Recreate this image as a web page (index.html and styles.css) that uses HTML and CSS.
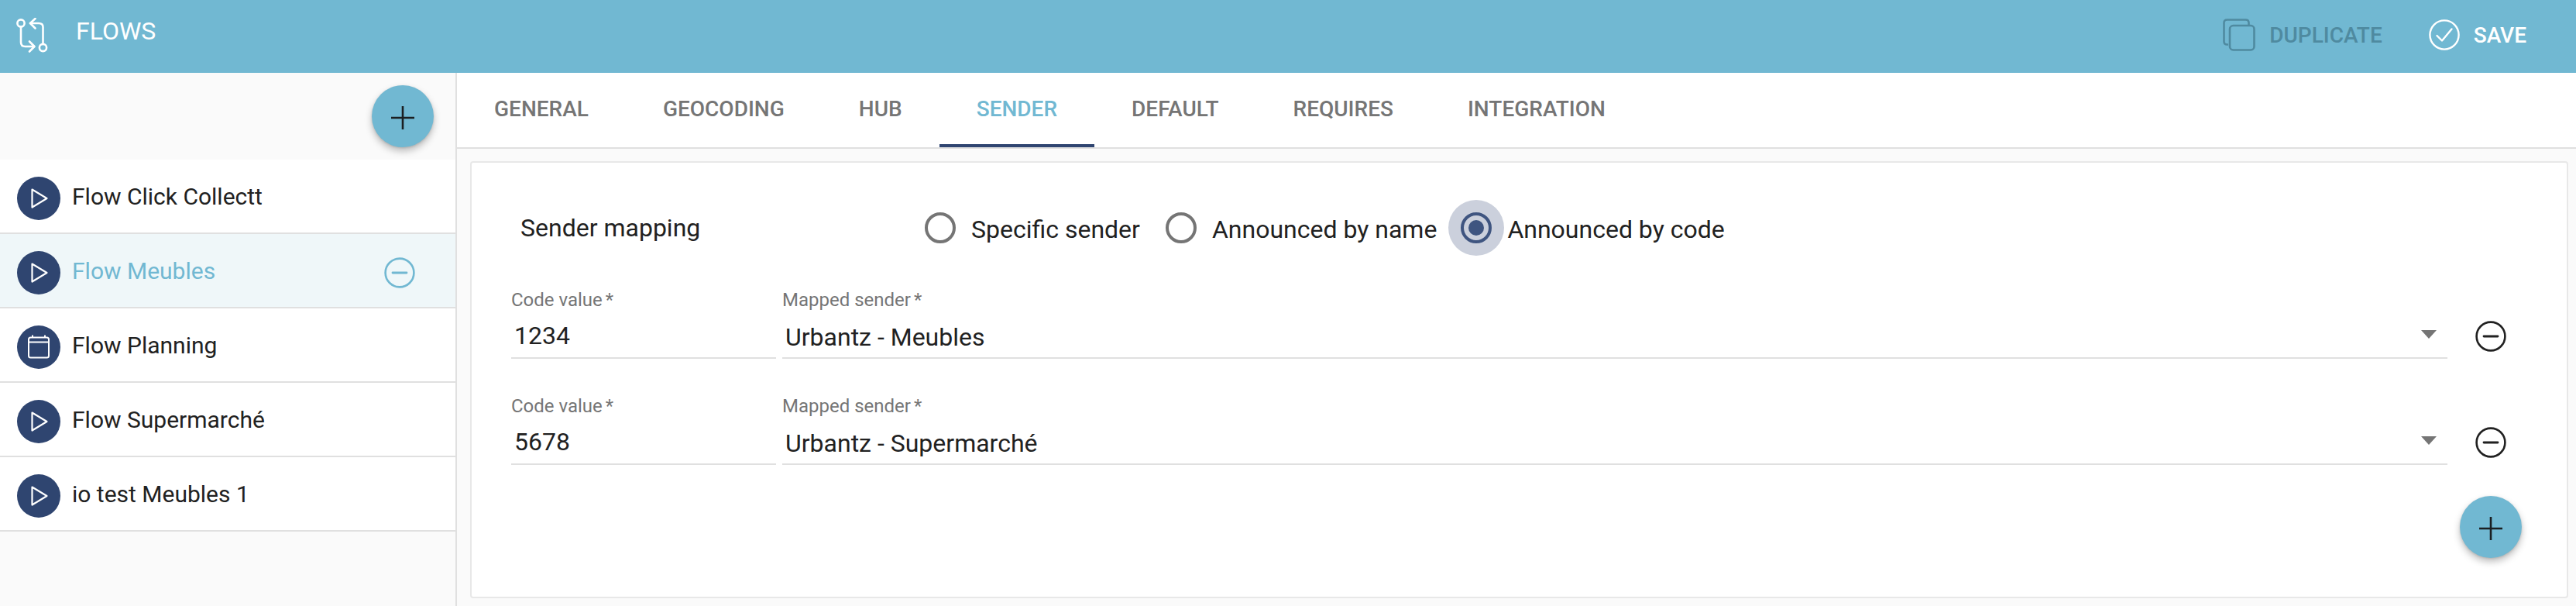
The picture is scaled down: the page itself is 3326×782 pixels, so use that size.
FILE: index.html
```html
<!DOCTYPE html>
<html lang="en">
<head>
<meta charset="utf-8">
<title>Flows</title>
<link rel="stylesheet" href="styles.css">
</head>
<body>
<svg class="defs" width="0" height="0" aria-hidden="true">
  <symbol id="play" viewBox="0 0 56 56"><path d="M19.5 16.5 L38.5 28 L19.5 39.5 Z" fill="none" stroke="#fff" stroke-width="2.2" stroke-linejoin="round"/></symbol>
  <symbol id="cal" viewBox="0 0 56 56"><rect x="15" y="15.5" width="26" height="26" rx="2.5" fill="none" stroke="#fff" stroke-width="2"/><path d="M15 21.5H41M20 12.5V15.5M36 12.5V15.5" fill="none" stroke="#fff" stroke-width="2"/></symbol>
  <symbol id="minus" viewBox="0 0 40 40"><circle cx="20" cy="20" r="18.4" fill="none" stroke="currentColor" stroke-width="2.6"/><path d="M11 20H29" stroke="currentColor" stroke-width="2.8" stroke-linecap="round"/></symbol>
  <symbol id="plus" viewBox="0 0 30 30"><path d="M15 0V30M0 15H30" stroke="#1b1f22" stroke-width="2.6" fill="none" stroke-linecap="round"/></symbol>
</svg>
<header class="topbar">
  <div class="brand">
    <svg class="flow-icon" width="42" height="46" viewBox="0 0 42 46" fill="none" stroke="#fff" stroke-width="2.6" stroke-linecap="round" stroke-linejoin="round">
      <circle cx="6" cy="7" r="4.6"/>
      <path d="M6 11.6V31.5Q6 37 11.5 37H23"/>
      <path d="M17 30.5L23.5 37L17 43.5"/>
      <circle cx="34.5" cy="38.5" r="4.6"/>
      <path d="M34.5 33.9V12Q34.5 7 29 7H18"/>
      <path d="M24.5 1L18 7L24.5 13.5"/>
    </svg>
    <span class="brand-title">FLOWS</span>
  </div>
  <div class="top-actions">
    <div class="top-btn disabled">
      <svg width="42" height="42" viewBox="0 0 42 42" fill="none" stroke="#4f8aa0" stroke-width="2.6">
        <path d="M7 33.5H5.5Q1.5 33.5 1.5 29.5V5.5Q1.5 1.5 5.5 1.5H29.5Q33.5 1.5 33.5 5.5V8"/>
        <rect x="9" y="9" width="31.5" height="31.5" rx="4.5"/>
      </svg>
      <span>DUPLICATE</span>
    </div>
    <div class="top-btn">
      <svg width="40" height="40" viewBox="0 0 40 40" fill="none" stroke="#fff" stroke-width="2.4" stroke-linecap="round" stroke-linejoin="round">
        <circle cx="20" cy="20" r="18.6"/>
        <path d="M10.5 21L17 27.5L29.5 12.5"/>
      </svg>
      <span>SAVE</span>
    </div>
  </div>
</header>
<div class="layout">
  <aside class="sidebar">
    <div class="side-head"><button class="fab" type="button"><svg width="30" height="30"><use href="#plus"/></svg></button></div>
    <ul class="flow-list">
      <li class="flow-row"><span class="avatar"><svg width="56" height="56"><use href="#play"/></svg></span><span class="flow-name">Flow Click Collectt</span></li>
      <li class="flow-row active"><span class="avatar"><svg width="56" height="56"><use href="#play"/></svg></span><span class="flow-name">Flow Meubles</span><svg class="row-remove" width="40" height="40"><use href="#minus"/></svg></li>
      <li class="flow-row"><span class="avatar"><svg width="56" height="56"><use href="#cal"/></svg></span><span class="flow-name">Flow Planning</span></li>
      <li class="flow-row"><span class="avatar"><svg width="56" height="56"><use href="#play"/></svg></span><span class="flow-name">Flow Supermarché</span></li>
      <li class="flow-row"><span class="avatar"><svg width="56" height="56"><use href="#play"/></svg></span><span class="flow-name">io test Meubles 1</span></li>
    </ul>
  </aside>
  <main class="main">
    <nav class="tabs">
      <div class="tab">GENERAL</div>
      <div class="tab">GEOCODING</div>
      <div class="tab">HUB</div>
      <div class="tab current">SENDER</div>
      <div class="tab">DEFAULT</div>
      <div class="tab">REQUIRES</div>
      <div class="tab">INTEGRATION</div>
    </nav>
    <section class="card">
      <div class="mapping-row">
        <div class="mapping-label">Sender mapping</div>
        <div class="radio-group">
          <label class="radio"><span class="radio-box"><span class="ring"></span></span><span class="radio-text">Specific sender</span></label>
          <label class="radio"><span class="radio-box"><span class="ring"></span></span><span class="radio-text">Announced by name</span></label>
          <label class="radio checked"><span class="radio-box"><span class="ring"><span class="dot"></span></span></span><span class="radio-text">Announced by code</span></label>
        </div>
      </div>
      <div class="field-row">
        <div class="field code"><div class="field-label">Code value<span class="req">*</span></div><div class="field-value">1234</div></div>
        <div class="field select"><div class="field-label">Mapped sender<span class="req">*</span></div><div class="field-value">Urbantz - Meubles</div><span class="caret"></span></div>
        <div class="row-action"><svg width="40" height="40"><use href="#minus"/></svg></div>
      </div>
      <div class="field-row">
        <div class="field code"><div class="field-label">Code value<span class="req">*</span></div><div class="field-value">5678</div></div>
        <div class="field select"><div class="field-label">Mapped sender<span class="req">*</span></div><div class="field-value">Urbantz - Supermarché</div><span class="caret"></span></div>
        <div class="row-action"><svg width="40" height="40"><use href="#minus"/></svg></div>
      </div>
      <div class="card-foot"><button class="fab" type="button"><svg width="30" height="30"><use href="#plus"/></svg></button></div>
    </section>
  </main>
</div>
</body>
</html>
```

FILE: styles.css
```css
* { box-sizing: border-box; }
html, body { margin: 0; height: 100%; }
body {
  font-family: Roboto, "Liberation Sans", sans-serif;
  color: #212121;
  background: #fafafa;
  display: flex;
  flex-direction: column;
  overflow: hidden;
}
.defs { position: absolute; }

.topbar {
  height: 94px;
  flex: none;
  background: #71b8d2;
  display: flex;
  justify-content: space-between;
  color: #fff;
}
.brand { display: flex; align-items: flex-start; padding: 23px 0 0 21px; }
.brand-title { font-size: 32px; font-weight: 400; line-height: 36px; margin: -1px 0 0 35px; }
.top-actions { display: flex; padding: 24px 64px 0 0; align-items: flex-start; }
.top-btn {
  display: flex;
  align-items: center;
  font-size: 28px;
  font-weight: 500;
  height: 42px;
}
.top-btn span { margin-left: 18px; }
.top-btn.disabled { color: #4f8aa0; margin-right: 60px; }

.layout { flex: 1; display: flex; min-height: 0; }
.sidebar { width: 590px; flex: none; border-right: 2px solid #e0e0e0; background: #fafafa; }
.side-head { height: 112px; display: flex; justify-content: flex-end; padding: 16px 28px 0 0; }
.flow-list { list-style: none; margin: 0; padding: 0; background: #fff; }
.flow-row {
  height: 96px;
  border-bottom: 2px solid #e0e0e0;
  display: flex;
  align-items: center;
  padding: 0 0 0 22px;
  font-size: 30px;
}
.flow-row.active { background: #eff7f9; color: #71b8d2; }
.avatar {
  width: 56px; height: 56px;
  border-radius: 50%;
  background: #2f4570;
  flex: none;
  display: block;
  margin-top: 6px;
}
.avatar svg { display: block; }
.flow-name { margin-left: 15px; }
.row-remove { margin: 6px 52px 0 auto; color: #71b8d2; }

.fab {
  width: 80px; height: 80px;
  border: 0; padding: 0;
  border-radius: 50%;
  background: #71b8d2;
  box-shadow: 0 5px 10px rgba(0,0,0,.25), 0 1px 3px rgba(0,0,0,.12);
  display: flex;
  align-items: center;
  justify-content: center;
}
.fab svg { margin-top: 4px; }

.main { flex: 1; min-width: 0; display: flex; flex-direction: column; }
.tabs { height: 98px; flex: none; display: flex; background: #fff; border-bottom: 2px solid #e0e0e0; }
.tab {
  padding: 0 48px;
  height: 96px;
  font-size: 28px;
  font-weight: 500;
  color: #757575;
  line-height: 94px;
}
.tab.current { color: #71b8d2; border-bottom: 4px solid #2f4570; }

.card {
  flex: 1;
  margin: 16px 10px 10px 17px;
  background: #fff;
  border: 2px solid #e8e8e8;
  border-radius: 4px;
  padding: 48px 42px 0 51px;
}
.mapping-row { display: flex; align-items: center; height: 72px; }
.mapping-label { width: 518px; padding-left: 12px; font-size: 32px; line-height: 38px; }
.radio-group { display: flex; gap: 17px; }
.radio { display: flex; align-items: center; font-size: 32px; }
.radio.checked { margin-left: -2px; }
.radio-text { margin: 4px 0 0 4px; }
.radio-box { width: 72px; height: 72px; border-radius: 50%; display: flex; align-items: center; justify-content: center; }
.ring { width: 40px; height: 40px; border-radius: 50%; border: 4px solid #757575; display: flex; align-items: center; justify-content: center; }
.radio.checked .radio-box { background: #cbd0dc; }
.radio.checked .ring { border-color: #3f5580; }
.dot { width: 20px; height: 20px; border-radius: 50%; background: #3f5580; }

.field-row { display: flex; gap: 8px; margin-top: 43px; }
.field-row + .field-row { margin-top: 47px; }
.field { position: relative; border-bottom: 2px solid #e0e0e0; height: 90px; }
.field.code { width: 342px; flex: none; }
.field.select { flex: 1; min-width: 0; }
.field-label { font-size: 24px; line-height: 28px; color: #757575; }
.req { margin-left: 4px; }
.field-value { font-size: 32px; line-height: 44px; padding: 10px 0 0 4px; }
.select .field-value { padding-top: 12px; }
.caret {
  position: absolute;
  right: 14px; top: 53px;
  width: 0; height: 0;
  border-left: 10.5px solid transparent;
  border-right: 10.5px solid transparent;
  border-top: 11px solid #757575;
}
.row-action { width: 112px; margin-left: -8px; flex: none; display: flex; justify-content: center; align-items: flex-end; color: #212121; padding-bottom: 9px; }
.card-foot { display: flex; justify-content: flex-end; padding: 40px 16px 0 0; }
```
